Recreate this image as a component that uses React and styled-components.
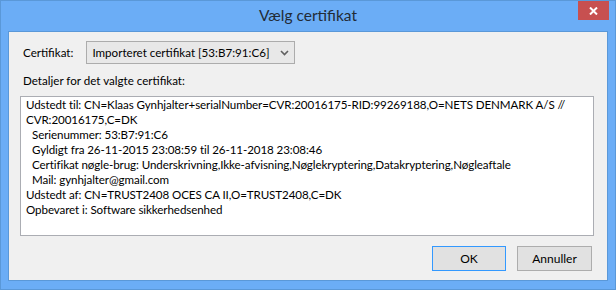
import React, { useState } from 'react'
import styled, { createGlobalStyle } from 'styled-components'

const GlobalStyle = createGlobalStyle`
  html, body {
    margin: 0;
    padding: 0;
    background: #ffffff;
  }
  body {
    font-family: Lato, "Segoe UI", "Noto Sans", sans-serif;
    font-size: 11.6px;
    color: #000;
  }
`

const WINDOW = styled.div`
  box-sizing: border-box;
  width: 616px;
  height: 290px;
  background: #6badf6;
  border: 1px solid #5a98d8;
  display: flex;
  flex-direction: column;
  padding: 0 7px 8px 7px;
`

const TITLEBAR = styled.div`
  height: 30px;
  display: grid;
  grid-template-columns: 1fr auto 1fr;
  align-items: start;
  flex-shrink: 0;
`

const TITLE = styled.div`
  grid-column: 2;
  font-size: 15.5px;
  line-height: 30px;
  color: #222b36;
  margin-top: -1px;
`

const CLOSE = styled.button`
  grid-column: 3;
  justify-self: end;
  width: 31px;
  height: 19px;
  border: none;
  padding: 0;
  margin: 0 -1px 0 0;
  background: #c75050;
  display: flex;
  align-items: center;
  justify-content: center;
  cursor: default;
`

const CLIENT = styled.div`
  flex: 1;
  background: #f0f0f0;
  border: 1px solid #5a98d8;
  display: flex;
  flex-direction: column;
  padding: 9px 14px 0 11px;
`

const ROW = styled.div`
  display: flex;
  align-items: center;
  padding-left: 3px;
`

const LABEL = styled.label`
  white-space: nowrap;
  margin-right: ${p => p.gap || 0}px;
  display: block;
  line-height: 15px;
`

const SELECT = styled.div`
  box-sizing: border-box;
  width: 209px;
  height: 23px;
  border: 1px solid #acacac;
  background: #e8e8e8;
  display: flex;
  align-items: center;
  justify-content: space-between;
  padding: 0 5px 0 5px;
  white-space: nowrap;
`

const CAPTION = styled.div`
  padding-left: 3px;
  margin-top: 9px;
  line-height: 15px;
`

const DETAILS = styled.div`
  box-sizing: border-box;
  margin-top: 8px;
  width: 574px;
  height: 140px;
  background: #fff;
  border: 1px solid #abadb3;
  padding: 0 0 0 5px;
  overflow: hidden;
  letter-spacing: -0.09px;
`

const LINE = styled.div`
  line-height: 15px;
  white-space: nowrap;
  padding-left: ${p => (p.indent ? 6 : 0)}px;
`

const FOOTER = styled.div`
  display: flex;
  justify-content: flex-end;
  gap: 11px;
  margin-top: 10px;
  padding-right: 1px;
`

const BUTTON = styled.button`
  box-sizing: border-box;
  width: ${p => p.w}px;
  height: 25px;
  background: #e1e1e1;
  border: 1px solid ${p => (p.primary ? '#3399ff' : '#adadad')};
  font-family: inherit;
  font-size: 12px;
  color: #000;
  padding: 0;
`

const lines = [
  { t: 'Udstedt til: CN=Klaas Gynhjalter+serialNumber=CVR:20016175-RID:99269188,O=NETS DENMARK A/S //' },
  { t: 'CVR:20016175,C=DK' },
  { t: 'Serienummer: 53:B7:91:C6', indent: true },
  { t: 'Gyldigt fra 26-11-2015 23:08:59 til 26-11-2018 23:08:46', indent: true },
  { t: 'Certifikat nøgle-brug: Underskrivning,Ikke-afvisning,Nøglekryptering,Datakryptering,Nøgleaftale', indent: true },
  { t: 'Mail: gynhjalter@gmail.com', indent: true },
  { t: 'Udstedt af: CN=TRUST2408 OCES CA II,O=TRUST2408,C=DK' },
  { t: 'Opbevaret i: Software sikkerhedsenhed' },
]

function App() {
  const [cert] = useState('Importeret certifikat [53:B7:91:C6]')

  return (
    <>
      <GlobalStyle />
      <WINDOW>
        <TITLEBAR>
          <TITLE>Vælg certifikat</TITLE>
          <CLOSE aria-label="Luk">
            <svg width="9" height="8" viewBox="0 0 9 8">
              <path d="M1 0.5 L8 7.5 M8 0.5 L1 7.5" stroke="#fff" strokeWidth="2" />
            </svg>
          </CLOSE>
        </TITLEBAR>
        <CLIENT>
          <ROW>
            <LABEL gap={13}>Certifikat:</LABEL>
            <SELECT>
              <span>{cert}</span>
              <svg width="9" height="6" viewBox="0 0 9 6">
                <path d="M1 1 L4.5 4.5 L8 1" stroke="#606060" strokeWidth="1.6" fill="none" />
              </svg>
            </SELECT>
          </ROW>
          <CAPTION>Detaljer for det valgte certifikat:</CAPTION>
          <DETAILS>
            {lines.map((l, i) => (
              <LINE key={i} indent={l.indent}>{l.t}</LINE>
            ))}
          </DETAILS>
          <FOOTER>
            <BUTTON w={74} primary>OK</BUTTON>
            <BUTTON w={75}>Annuller</BUTTON>
          </FOOTER>
        </CLIENT>
      </WINDOW>
    </>
  )
}

export default App
